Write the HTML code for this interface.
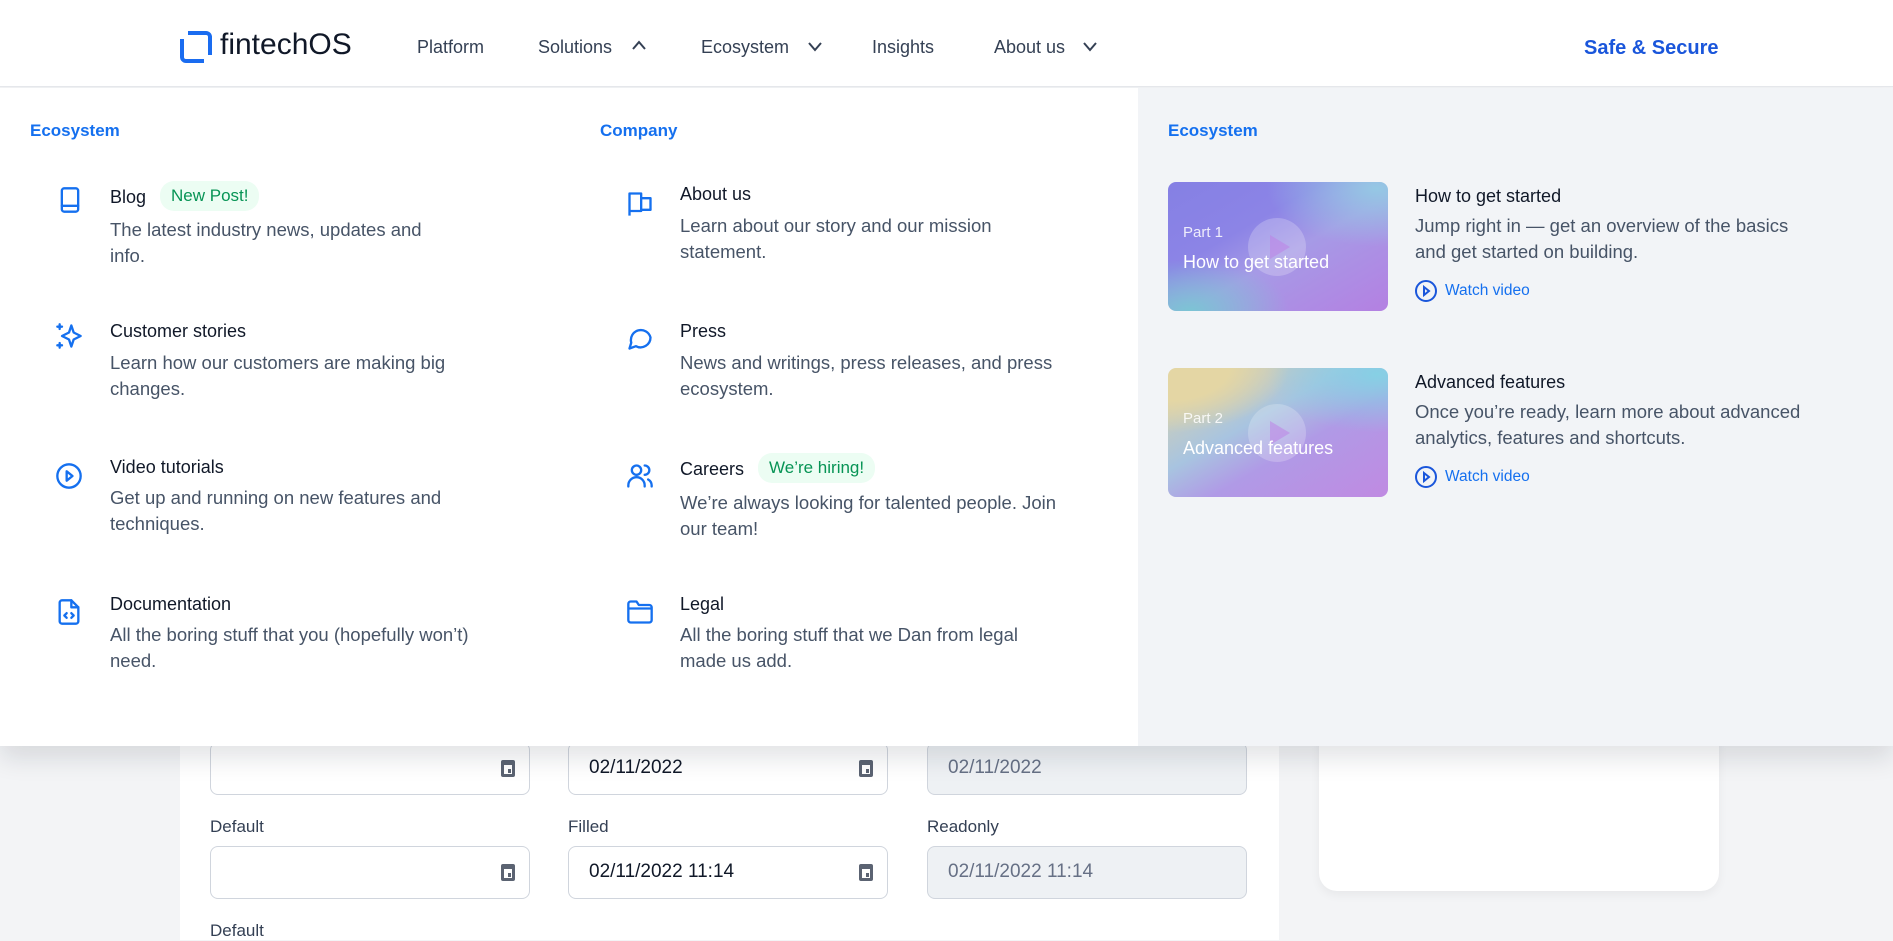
<!DOCTYPE html>
<html><head><meta charset="utf-8"><style>
*{margin:0;padding:0;box-sizing:border-box}
body{width:1893px;height:935px;overflow:hidden;background:#f3f4f6;font-family:"Liberation Sans",sans-serif;position:relative}
.abs{position:absolute}
.hdr{left:0;top:0;width:1893px;height:87px;background:#fff;border-bottom:1px solid #e5e7eb;z-index:5}
.nav{font-size:18px;color:#344054;top:37px}
.menu{left:0;top:88px;width:1893px;height:658px;background:#fff;z-index:4;box-shadow:0 12px 24px rgba(16,24,40,.12)}
.rp{left:1138px;top:0;width:755px;height:658px;background:#f2f4f7}
.h{font-size:17px;font-weight:bold;color:#1570ef}
.t{font-size:18px;color:#101828}
.d{font-size:18.5px;color:#475467;line-height:26px}
.badge{font-size:17px;color:#079455;background:#ecfdf3;border-radius:14px;padding:5px 11px}
.ic{width:28px;height:28px}
.thumb{width:220px;height:129px;border-radius:8px;overflow:hidden}
.thumb .p{position:absolute;left:15px;top:42px;color:rgba(255,255,255,.85);font-size:15px}
.thumb .n{position:absolute;left:15px;top:70px;color:#fff;font-size:18px}
.thumb .c{position:absolute;left:80px;top:36px;width:58px;height:58px;border-radius:50%;background:rgba(255,255,255,.22)}
.thumb .c:after{content:"";position:absolute;left:22px;top:17px;border-left:20px solid rgba(190,130,230,.55);border-top:12px solid transparent;border-bottom:12px solid transparent}
.wv{font-size:15.5px;color:#1570ef}
.card{left:180px;top:700px;width:1099px;height:240px;background:#fff}
.rcard{left:1319px;top:700px;width:400px;height:191px;background:#fff;border-radius:0 0 18px 18px;box-shadow:0 4px 10px rgba(0,0,0,.05)}
.f{width:320px;height:53px;border:1px solid #d0d5dd;border-radius:8px;background:#fff;font-size:19px;color:#101828;padding:14px 20px}
.f.ro{background:#eef1f4;color:#667085}
.cal{position:absolute;right:14px;top:17px;width:14px;height:17px;background:#5b6372;border-radius:2px}
.cal:after{content:"";position:absolute;left:3px;top:5px;width:8px;height:9px;background:#fff}
.cal:before{content:"";position:absolute;left:7px;top:9px;width:3px;height:4px;background:#5b6372;z-index:1}
.lb{font-size:17px;color:#344054}
</style></head><body>
<div class="abs hdr">
  <svg class="abs" style="left:179px;top:30px" width="34" height="34" viewBox="0 0 34 34"><path d="M9 3h18a4 4 0 0 1 4 4v18" fill="none" stroke="#1a6cf0" stroke-width="4"/><path d="M25 31H7a4 4 0 0 1-4-4V9" fill="none" stroke="#1a6cf0" stroke-width="4"/></svg>
  <div class="abs" style="left:220px;top:28px;font-size:30px;color:#101828">fintechOS</div>
  <div class="abs nav" style="left:417px">Platform</div>
  <div class="abs nav" style="left:538px">Solutions</div>
  <svg class="abs" style="left:631px;top:39px" width="16" height="12"><path d="M2 10l6-7 6 7" fill="none" stroke="#344054" stroke-width="2"/></svg>
  <div class="abs nav" style="left:701px">Ecosystem</div>
  <svg class="abs" style="left:807px;top:41px" width="16" height="12"><path d="M2 2l6 7 6-7" fill="none" stroke="#344054" stroke-width="2"/></svg>
  <div class="abs nav" style="left:872px">Insights</div>
  <div class="abs nav" style="left:994px">About us</div>
  <svg class="abs" style="left:1082px;top:41px" width="16" height="12"><path d="M2 2l6 7 6-7" fill="none" stroke="#344054" stroke-width="2"/></svg>
  <div class="abs" style="left:1584px;top:37px;font-size:20px;font-weight:bold;color:#1a56db">Safe &amp; Secure</div>
</div>

<div class="abs card"></div>
<div class="abs rcard"></div>
<div class="abs f" style="left:210px;top:742px"><span class="cal"></span></div>
<div class="abs f" style="left:568px;top:742px">02/11/2022<span class="cal"></span></div>
<div class="abs f ro" style="left:927px;top:742px">02/11/2022</div>
<div class="abs lb" style="left:210px;top:817px">Default</div>
<div class="abs lb" style="left:568px;top:817px">Filled</div>
<div class="abs lb" style="left:927px;top:817px">Readonly</div>
<div class="abs f" style="left:210px;top:846px"><span class="cal"></span></div>
<div class="abs f" style="left:568px;top:846px">02/11/2022 11:14<span class="cal"></span></div>
<div class="abs f ro" style="left:927px;top:846px">02/11/2022 11:14</div>
<div class="abs lb" style="left:210px;top:921px">Default</div>

<div class="abs menu">
  <div class="abs h" style="left:30px;top:33px">Ecosystem</div>
  <div class="abs h" style="left:600px;top:33px">Company</div>

  <svg class="abs ic" style="left:56px;top:98px" viewBox="0 0 24 24" fill="none" stroke="#1570ef" stroke-width="2" stroke-linecap="round" stroke-linejoin="round"><rect x="5" y="2" width="14" height="20" rx="2"/><path d="M5 17h14"/></svg>
  <div class="abs t" style="left:110px;top:99px">Blog</div>
  <div class="abs badge" style="left:160px;top:93px">New Post!</div>
  <div class="abs d" style="left:110px;top:129px">The latest industry news, updates and<br>info.</div>

  <svg class="abs ic" style="left:55px;top:234px" viewBox="0 0 24 24" fill="none" stroke="#1570ef" stroke-width="2" stroke-linecap="round" stroke-linejoin="round"><path d="M4 2v4M2 4h4M4 18v4M2 20h4M14 3l2 6 6 3-6 3-2 6-2-6-6-3 6-3z"/></svg>
  <div class="abs t" style="left:110px;top:233px">Customer stories</div>
  <div class="abs d" style="left:110px;top:262px">Learn how our customers are making big<br>changes.</div>

  <svg class="abs ic" style="left:55px;top:374px" viewBox="0 0 24 24" fill="none" stroke="#1570ef" stroke-width="2" stroke-linecap="round" stroke-linejoin="round"><circle cx="12" cy="12" r="10"/><path d="M10 8l5 4-5 4z"/></svg>
  <div class="abs t" style="left:110px;top:369px">Video tutorials</div>
  <div class="abs d" style="left:110px;top:397px">Get up and running on new features and<br>techniques.</div>

  <svg class="abs ic" style="left:55px;top:510px" viewBox="0 0 24 24" fill="none" stroke="#1570ef" stroke-width="2" stroke-linecap="round" stroke-linejoin="round"><path d="M14 2H6a2 2 0 0 0-2 2v16a2 2 0 0 0 2 2h12a2 2 0 0 0 2-2V8z"/><path d="M14 2v6h6M10 13l-2 2 2 2M14 13l2 2-2 2"/></svg>
  <div class="abs t" style="left:110px;top:506px">Documentation</div>
  <div class="abs d" style="left:110px;top:534px">All the boring stuff that you (hopefully won’t)<br>need.</div>

  <svg class="abs ic" style="left:626px;top:102px" viewBox="0 0 24 24" fill="none" stroke="#1570ef" stroke-width="2" stroke-linejoin="round"><path d="M3 22V3h10v15H3M13 7h8v10h-8"/></svg>
  <div class="abs t" style="left:680px;top:96px">About us</div>
  <div class="abs d" style="left:680px;top:125px">Learn about our story and our mission<br>statement.</div>

  <svg class="abs ic" style="left:626px;top:236px" viewBox="0 0 24 24" fill="none" stroke="#1570ef" stroke-width="2" stroke-linejoin="round"><path d="M21 11.5a8.5 8.5 0 0 1-12.5 7.5L3 21l1.5-5A8.5 8.5 0 1 1 21 11.5z"/></svg>
  <div class="abs t" style="left:680px;top:233px">Press</div>
  <div class="abs d" style="left:680px;top:262px">News and writings, press releases, and press<br>ecosystem.</div>

  <svg class="abs ic" style="left:626px;top:374px" viewBox="0 0 24 24" fill="none" stroke="#1570ef" stroke-width="2" stroke-linecap="round"><circle cx="9" cy="7" r="4"/><path d="M2 21v-1a6 6 0 0 1 14 0v1M16 3a4 4 0 0 1 0 8M19 15a6 6 0 0 1 3 5v1"/></svg>
  <div class="abs t" style="left:680px;top:371px">Careers</div>
  <div class="abs badge" style="left:758px;top:365px">We’re hiring!</div>
  <div class="abs d" style="left:680px;top:402px">We’re always looking for talented people. Join<br>our team!</div>

  <svg class="abs ic" style="left:626px;top:510px" viewBox="0 0 24 24" fill="none" stroke="#1570ef" stroke-width="2" stroke-linejoin="round"><path d="M2 5a2 2 0 0 1 2-2h5l2 3h9a2 2 0 0 1 2 2v11a2 2 0 0 1-2 2H4a2 2 0 0 1-2-2z"/><path d="M2 9h20"/></svg>
  <div class="abs t" style="left:680px;top:506px">Legal</div>
  <div class="abs d" style="left:680px;top:534px">All the boring stuff that we Dan from legal<br>made us add.</div>

  <div class="abs rp">
    <div class="abs h" style="left:30px;top:33px">Ecosystem</div>
    <div class="abs thumb" style="left:30px;top:94px;background:radial-gradient(ellipse 45% 40% at 10% 100%,#7cc4d4 0%,rgba(124,196,212,0) 100%),radial-gradient(ellipse 50% 45% at 95% 5%,#95c8e4 0%,rgba(149,200,228,0) 100%),linear-gradient(150deg,#8580e4 0%,#8c84e6 35%,#a69ae6 55%,#b480e2 100%)">
      <div class="c"></div><div class="p">Part 1</div><div class="n">How to get started</div></div>
    <div class="abs t" style="left:277px;top:98px">How to get started</div>
    <div class="abs d" style="left:277px;top:125px">Jump right in — get an overview of the basics<br>and get started on building.</div>
    <svg class="abs" style="left:276px;top:191px" width="24" height="24" viewBox="0 0 24 24" fill="none" stroke="#1a56db" stroke-width="2"><circle cx="12" cy="12" r="10"/><path d="M10 8l5 4-5 4z"/></svg>
    <div class="abs wv" style="left:307px;top:194px">Watch video</div>

    <div class="abs thumb" style="left:30px;top:280px;background:radial-gradient(ellipse 55% 50% at 0% 0%,#e4d6a4 0%,#e4d6a4 50%,rgba(228,214,164,0) 100%),radial-gradient(ellipse 50% 45% at 95% 5%,#86d0e4 0%,rgba(134,208,228,0) 100%),linear-gradient(150deg,#e2d4a4 0%,#a8c4e0 40%,#b09ae6 60%,#c08ae2 100%)">
      <div class="c"></div><div class="p">Part 2</div><div class="n">Advanced features</div></div>
    <div class="abs t" style="left:277px;top:284px">Advanced features</div>
    <div class="abs d" style="left:277px;top:311px">Once you’re ready, learn more about advanced<br>analytics, features and shortcuts.</div>
    <svg class="abs" style="left:276px;top:377px" width="24" height="24" viewBox="0 0 24 24" fill="none" stroke="#1a56db" stroke-width="2"><circle cx="12" cy="12" r="10"/><path d="M10 8l5 4-5 4z"/></svg>
    <div class="abs wv" style="left:307px;top:380px">Watch video</div>
  </div>
</div>
</body></html>
